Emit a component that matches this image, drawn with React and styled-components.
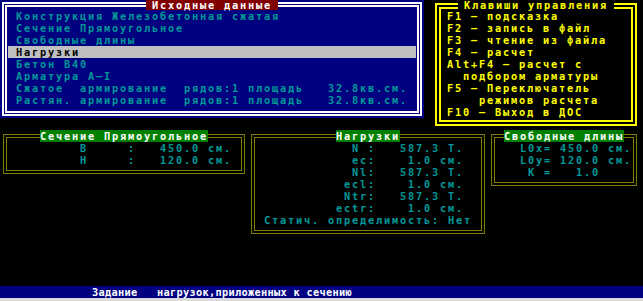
import React from 'react';
import styled, { createGlobalStyle } from 'styled-components';

const GlobalStyle = createGlobalStyle`
  html, body {
    margin: 0;
    padding: 0;
    background: #000;
  }
  body {
    font-family: "DejaVu Sans Mono", "Liberation Mono", monospace;
    font-weight: bold;
    font-size: 10.3px;
    letter-spacing: 1.8px;
  }
`;

const Screen = styled.div`
  width: 643px;
  height: 301px;
  display: flex;
  flex-direction: column;
  overflow: hidden;
  background: #000;
`;

const Row = styled.div`
  display: flex;
  align-items: flex-start;
  gap: ${(p) => p.$gap || 0}px;
  height: ${(p) => p.$h}px;
  flex: none;
`;

const Panel = styled.div`
  position: relative;
  flex: none;
  box-sizing: border-box;
  display: flex;
  width: ${(p) => p.$w}px;
  height: ${(p) => p.$h}px;
  padding: ${(p) => p.$pad};
  background: ${(p) => p.$bg || 'transparent'};
`;

const Frame = styled.div`
  flex: 1;
  border: ${(p) => p.$bw}px double ${(p) => p.$color};
  padding: ${(p) => p.$pad};
  color: ${(p) => p.$text};
`;

const TitleBar = styled.div`
  position: absolute;
  top: 0;
  left: 0;
  right: 0;
  display: flex;
  justify-content: center;
`;

const Title = styled.span`
  display: block;
  height: ${(p) => p.$h || 12}px;
  line-height: ${(p) => p.$h || 12}px;
  padding: 0 ${(p) => p.$px || 0}px;
  background: ${(p) => p.$bg};
  color: ${(p) => p.$color};
  white-space: pre;
`;

const Line = styled.div`
  height: 12px;
  line-height: 12px;
  white-space: pre;
  padding-left: ${(p) => p.$indent || 0}px;
  background: ${(p) => (p.$active ? '#c0c0c0' : 'transparent')};
  color: ${(p) => (p.$active ? '#000' : 'inherit')};
`;

const Spacer = styled.div`
  flex: 1;
`;

const StatusBar = styled.div`
  flex: none;
  height: 12px;
  line-height: 12px;
  background: #000080;
  color: #fff;
  letter-spacing: 0.3px;
  padding-left: 92px;
  white-space: pre;
`;

const BottomEdge = styled.div`
  flex: none;
  height: 3px;
  background: #dcdcdc;
`;

const sourceItems = [
  'Конструкция Железобетонная сжатая',
  'Сечение Прямоугольное',
  'Свободные длины',
  'Нагрузки',
  'Бетон B40',
  'Арматура A–I',
  'Сжатое  армирование  рядов:1 площадь   32.8кв.см.',
  'Растян. армирование  рядов:1 площадь   32.8кв.см.',
];

const keys = [
  'F1 – подсказка',
  'F2 – запись в файл',
  'F3 – чтение из файла',
  'F4 – расчет',
  'Alt+F4 – расчет с',
  '  подбором арматуры',
  'F5 – Переключатель',
  '    режимов расчета',
  'F10 – Выход в ДОС',
];

const section = [
  '         B     :   450.0 см.',
  '         H     :   120.0 см.',
];

const loads = [
  '            N :   587.3 Т.',
  '            ec:    1.0 см.',
  '            Nl:   587.3 Т.',
  '           ecl:    1.0 см.',
  '           Ntr:   587.3 Т.',
  '          ectr:    1.0 см.',
  ' Статич. определимость: Нет',
];

const lengths = [
  '   L0x= 450.0 см.',
  '   L0y= 120.0 см.',
  '    K =   1.0',
];

const TEAL = '#009898';
const OLIVE = '#808000';

const BoxPanel = ({ w, h, title, lines }) => (
  <Panel $w={w} $h={h} $pad="4px 3px">
    <Frame $bw={4} $color={OLIVE} $pad="4px 1px 0" $text={TEAL}>
      {lines.map((l, i) => (
        <Line key={i}>{l}</Line>
      ))}
    </Frame>
    <TitleBar>
      <Title $bg="#008000" $color="#fff">{title}</Title>
    </TitleBar>
  </Panel>
);

const App = () => (
  <>
    <GlobalStyle />
    <Screen>
      <Row $h={130} $gap={8}>
        <Panel $w={424} $h={118} $pad="2px" $bg="#000080">
          <Frame $bw={5} $color="#fff" $pad="3px 1px 0" $text={TEAL}>
            {sourceItems.map((item, i) => (
              <Line key={item} $indent={8} $active={i === 3}>
                {item}
              </Line>
            ))}
          </Frame>
          <TitleBar>
            <Title $bg="#800000" $color="#fff" $px={6} $h={10}>Исходные данные</Title>
          </TitleBar>
        </Panel>
        <Panel $w={208} $h={130} $pad="3px 3px 4px 3px">
          <Frame $bw={6} $color="#ffff00" $pad="1px 0 0 6px" $text="#ffff00">
            {keys.map((k) => (
              <Line key={k}>{k}</Line>
            ))}
          </Frame>
          <TitleBar>
            <Title $bg="#000" $color="#ffff00" $px={6} $h={10}>Клавиши управления</Title>
          </TitleBar>
        </Panel>
      </Row>
      <Row $h={108}>
        <BoxPanel w={248} h={48} title="Сечение Прямоугольное" lines={section} />
        <BoxPanel w={240} h={108} title="Нагрузки" lines={loads} />
        <BoxPanel w={152} h={60} title="Свободные длины" lines={lengths} />
      </Row>
      <Spacer />
      <StatusBar>Задание   нагрузок,приложенных к сечению</StatusBar>
      <BottomEdge />
    </Screen>
  </>
);

export default App;
